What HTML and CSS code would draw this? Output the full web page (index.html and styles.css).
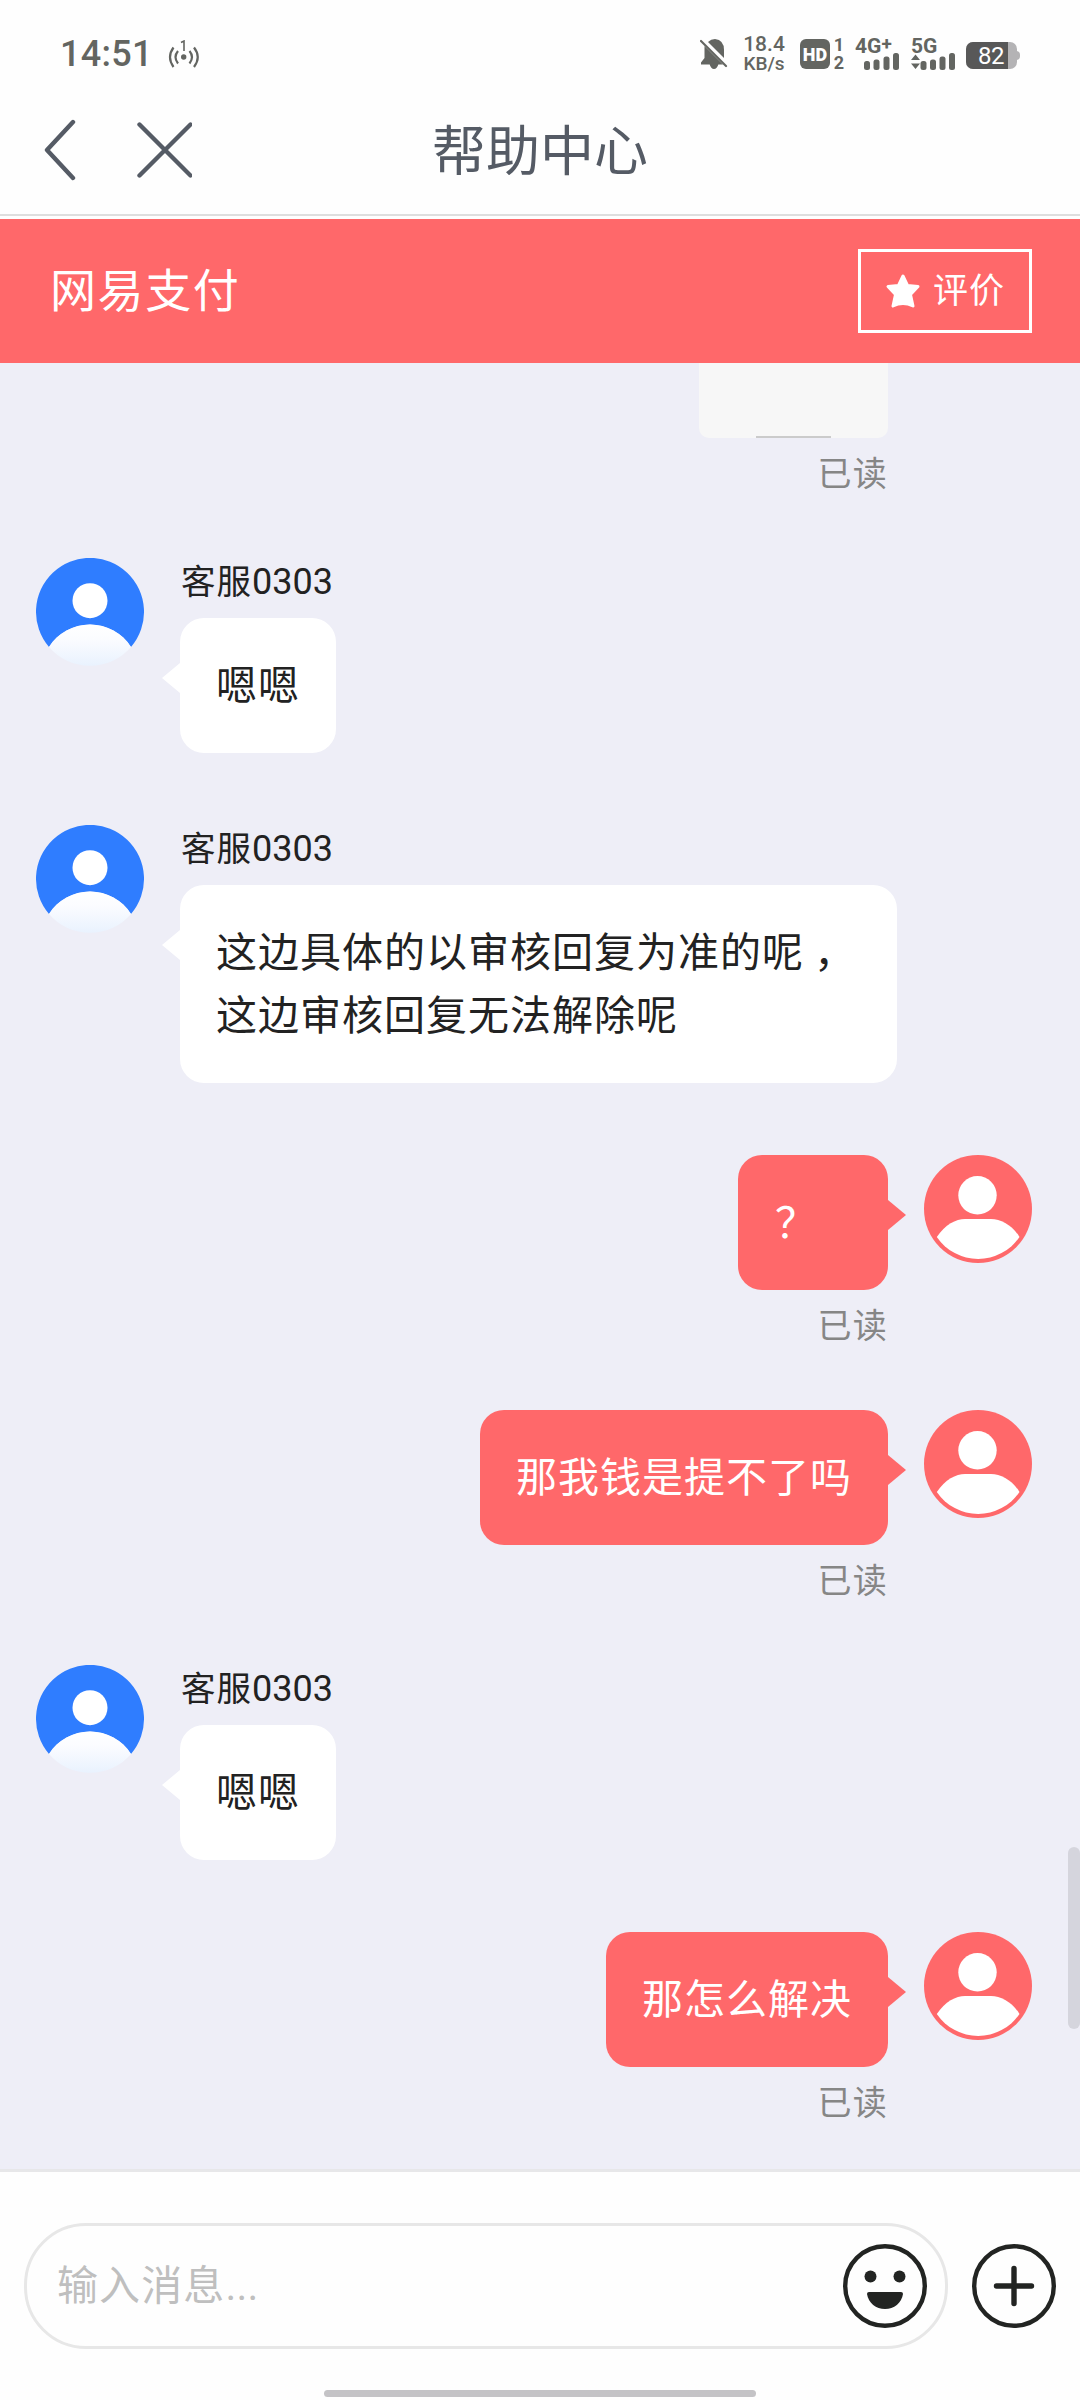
FILE: index.html
```html
<!DOCTYPE html>
<html lang="zh-CN">
<head>
<meta charset="utf-8">
<title>帮助中心</title>
<link rel="stylesheet" href="styles.css">
</head>
<body>
<svg class="defs" width="0" height="0" aria-hidden="true">
  <defs>
    <linearGradient id="shirt" x1="0" y1="0" x2="0" y2="1">
      <stop offset="0" stop-color="#ffffff"/>
      <stop offset="0.35" stop-color="#fbfcff"/>
      <stop offset="1" stop-color="#e9f2fe"/>
    </linearGradient>
    <symbol id="agent" viewBox="0 0 108 108">
      <path d="M13 89A54 54 0 1 1 95 89A48.500 48.500 0 0 0 13 89Z" fill="#2f7dff"/>
      <path d="M13 89A48.500 48.500 0 0 1 95 89A54 54 0 0 1 13 89Z" fill="url(#shirt)"/>
      <circle cx="54" cy="42.7" r="17.5" fill="#fff"/>
    </symbol>
    <symbol id="user" viewBox="0 0 108 108">
      <circle cx="54" cy="54" r="54" fill="#ff686a"/>
      <circle cx="53.5" cy="40.3" r="19.2" fill="#fff"/>
      <path d="M12.8 82C21 69.500 32 64 41 64H67C77 64 88 70 95.500 82A50 50 0 0 1 12.800 82Z" fill="#fff"/>
    </symbol>
  </defs>
</svg>
<div class="phone">
  <div class="status">
    <span class="clock">14:51</span>
    <svg class="hotspot" width="32" height="28" viewBox="0 0 32 28" fill="none" stroke="#636561" stroke-width="2.200">
      <path d="M5.500 7.500Q-1.500 17 5.500 27M10 11Q5 17 10 23.500M26 7.500Q33.500 17 26 27M21.500 11Q26.500 17 21.500 23.500"/>
      <path d="M13 2.500L16 1V11" stroke-width="1.600"/>
      <circle cx="15.700" cy="17" r="2.700" fill="#636561" stroke="none"/>
    </svg>
    <div class="status-right">
      <svg class="bell" width="28" height="32" viewBox="0 0 28 32" fill="#636561">
        <path d="M8 4Q11 1 15 1Q24 2 24 12V20L8 4Z"/>
        <path d="M4.500 8L23 26.500H1V24.500L4.500 20ZM9.500 26H18.500Q17 31 14 31Q11 31 9.500 26Z"/>
        <path d="M1 3L26 28" stroke="#636561" stroke-width="2.200" stroke-linecap="round"/>
      </svg>
      <div class="speed"><span>18.4</span><span class="unit">KB/s</span></div>
      <div class="hd">HD</div>
      <div class="sims"><span>1</span><span>2</span></div>
      <div class="net net-a">
        <span>4G<sup>+</sup></span>
        <svg width="36" height="17" viewBox="0 0 36 17" fill="#636561"><rect y="8" width="6" height="9" rx="2.500"/><rect x="9.500" y="6.500" width="6" height="10.500" rx="2.500"/><rect x="19.500" y="3.500" width="6" height="13.500" rx="2.500"/><rect x="29" y="0" width="6" height="17" rx="2.500"/></svg>
      </div>
      <div class="net net-b">
        <span>5G</span>
        <svg width="45" height="17" viewBox="0 0 45 17" fill="#636561"><path d="M4.500 1.500L9 7H0ZM0 10.500H9L4.500 16Z"/><rect x="9.500" y="8" width="6" height="9" rx="2.500"/><rect x="19" y="6.500" width="6" height="10.500" rx="2.500"/><rect x="28.500" y="3.500" width="6" height="13.500" rx="2.500"/><rect x="38" y="0" width="6" height="17" rx="2.500"/></svg>
      </div>
      <div class="battery"><span class="level">82</span></div>
    </div>
  </div>

  <div class="nav">
    <svg class="back" width="34" height="64" viewBox="0 0 34 64"><path d="M31 4L5 32L31 60"/></svg>
    <svg class="close" width="56" height="56" viewBox="0 0 56 56"><path d="M3.500 2.500L54.500 53.500M54.500 2.500L3.500 53.500"/></svg>
    <h1>帮助中心</h1>
  </div>

  <div class="brand">
    <span>网易支付</span>
    <div class="rate">
      <svg width="36" height="36" viewBox="0 0 36 36"><path d="M18 3L22.500 12.500L33 13.500L25.500 21.500L28 33Q18 28 8 33L10.500 21.500L3 13.500L13.500 12.500Z" fill="#fff" stroke="#fff" stroke-width="3" stroke-linejoin="round"/></svg>
      <span>评价</span>
    </div>
  </div>

  <div class="chat">
    <div class="sent">
      <div class="photo"><i></i></div>
      <div class="read">已读</div>
    </div>
    <div class="msg">
      <svg class="avatar"><use href="#agent"/></svg>
      <div><div class="name"><span>客服</span>0303</div><div class="bubble">嗯嗯</div></div>
    </div>
    <div class="msg">
      <svg class="avatar"><use href="#agent"/></svg>
      <div><div class="name"><span>客服</span>0303</div><div class="bubble wide">这边具体的以审核回复为准的呢<span class="comma">，</span><br>这边审核回复无法解除呢</div></div>
    </div>
    <div class="msg mine">
      <svg class="avatar"><use href="#user"/></svg>
      <div><div class="bubble short">？</div><div class="read">已读</div></div>
    </div>
    <div class="msg mine">
      <svg class="avatar"><use href="#user"/></svg>
      <div><div class="bubble">那我钱是提不了吗</div><div class="read">已读</div></div>
    </div>
    <div class="msg">
      <svg class="avatar"><use href="#agent"/></svg>
      <div><div class="name"><span>客服</span>0303</div><div class="bubble">嗯嗯</div></div>
    </div>
    <div class="msg mine">
      <svg class="avatar"><use href="#user"/></svg>
      <div><div class="bubble">那怎么解决</div><div class="read">已读</div></div>
    </div>
    <div class="scrollbar"></div>
  </div>

  <div class="composer">
    <div class="field">
      <div class="placeholder">输入消息<span>...</span></div>
      <svg width="84" height="84" viewBox="0 0 84 84"><circle cx="42" cy="42" r="39.800" fill="none" stroke="#222422" stroke-width="4.400"/><circle cx="27.500" cy="32.500" r="6" fill="#222422"/><circle cx="56.500" cy="32.500" r="6" fill="#222422"/><path d="M26 48H58Q60 48 60 50C58.500 59 51 65 42 65S25.500 59 24 50Q24 48 26 48Z" fill="#222422"/></svg>
    </div>
    <svg width="84" height="84" viewBox="0 0 84 84" fill="none" stroke="#222422"><circle cx="42" cy="42" r="39.800" stroke-width="4.400"/><path d="M42 24.500V59.500M24.500 42H59.500" stroke-width="5.400" stroke-linecap="round"/></svg>
  </div>
  <div class="home"></div>
</div>
</body>
</html>
```
FILE: styles.css
```css
* { box-sizing: border-box; }
body {
  margin: 0;
  font-family: Roboto, "Noto Sans CJK SC", sans-serif;
  color: #222;
  background: #fff;
}
svg { display: block; flex: none; }
.defs { position: absolute; }
.phone {
  width: 1080px;
  height: 2400px;
  display: flex;
  flex-direction: column;
  overflow: hidden;
  background: #fefefe;
}

/* status bar */
.status {
  height: 86px;
  flex: none;
  display: flex;
  align-items: flex-start;
  padding: 36px 60px 0;
  color: #636561;
}
.clock { font-size: 36px; font-weight: 500; line-height: 36px; letter-spacing: 0.3px; width: 108px; }
.hotspot { margin-top: 4px; }
.status-right { margin-left: auto; display: flex; align-items: flex-start; }
.bell { margin-top: 2px; }
.speed {
  width: 42px;
  margin-left: 15px;
  display: flex;
  flex-direction: column;
  align-items: center;
  font-size: 21px;
  line-height: 17px;
  font-weight: 500;
}
.speed .unit { font-size: 19px; line-height: 22px; }
.hd {
  width: 30px;
  height: 30px;
  margin: 3px 0 0 15px;
  border-radius: 6px;
  background: #636561;
  color: #fff;
  font-size: 18px;
  line-height: 31px;
  font-weight: 900;
  text-align: center;
}
.sims {
  width: 12px;
  margin: 0 0 0 3px;
  display: flex;
  flex-direction: column;
  align-items: center;
  font-size: 18px;
  line-height: 18px;
  font-weight: 700;
}
.net { height: 34px; display: flex; flex-direction: column; font-weight: 700; font-size: 21px; line-height: 17px; }
.net span { height: 17px; white-space: nowrap; }
.net-a { width: 45px; margin-left: 10px; padding-top: 2px; }
.net-a svg { margin: -2px 0 0 9px; }
.net-b { width: 45px; margin-left: 11px; padding-top: 2px; }
.net-b svg { margin-top: -2px; }
.net sup { font-size: 19px; line-height: 0; vertical-align: 3px; }
.battery {
  width: 51px;
  height: 27px;
  margin: 6px 3px 0 10px;
  border-radius: 7px;
  background: #b4b3b5;
  position: relative;
}
.battery::after {
  content: "";
  position: absolute;
  right: -3px;
  top: 9px;
  width: 4px;
  height: 9px;
  border-radius: 0 4px 4px 0;
  background: #b4b3b5;
}
.level {
  display: block;
  width: 42px;
  height: 27px;
  padding-left: 12px;
  border-radius: 7px 0 0 7px;
  background: #585858;
  color: #fff;
  font-size: 24px;
  line-height: 28px;
  letter-spacing: -0.5px;
}

/* navigation */
.nav {
  height: 130px;
  flex: none;
  display: grid;
  grid-template-columns: 34px 56px 1fr;
  column-gap: 60px;
  align-items: center;
  padding: 0 42px;
  border-bottom: 2px solid #dedede;
}
.nav svg { fill: none; stroke: #555b65; stroke-width: 4.4; stroke-linecap: round; stroke-linejoin: round; }
.nav h1 {
  margin: 0 0 0 180px;
  padding-top: 6px;
  font-size: 54px;
  line-height: 80px;
  font-weight: 400;
  color: #555b65;
}
.brand {
  height: 144px;
  flex: none;
  margin-top: 3px;
  padding: 0 48px 0 50px;
  display: flex;
  align-items: center;
  justify-content: space-between;
  background: #ff686a;
  color: #fff;
  font-size: 46px;
  letter-spacing: 1.6px;
  line-height: 72px;
}
.rate {
  width: 174px;
  height: 84px;
  border: 3px solid #fff;
  display: flex;
  align-items: center;
  gap: 12px;
  padding-left: 24px;
  font-size: 35px;
  letter-spacing: 1px;
}
.rate span { padding-top: 2px; }

/* conversation */
.chat {
  height: 1806px;
  flex: none;
  position: relative;
  overflow: hidden;
  background: #eeeef7;
}
.sent {
  height: 195px;
  padding-right: 192px;
  display: flex;
  flex-direction: column;
  align-items: flex-end;
}
.photo {
  width: 189px;
  height: 75px;
  display: flex;
  justify-content: center;
  align-items: flex-end;
  border-radius: 0 0 10px 10px;
  background: #f7f7f7;
}
.photo i { width: 75px; height: 2px; margin-right: 1px; background: #cbcbcb; }
.msg { display: flex; align-items: flex-start; gap: 36px; padding: 0 36px; margin-bottom: 72px; }
.mine { flex-direction: row-reverse; padding: 0 48px; margin-bottom: 57px; }
.avatar { width: 108px; height: 108px; }
.name { height: 60px; padding-left: 1px; font-size: 36px; line-height: 48px; }
.name span { font-size: 34.5px; letter-spacing: 1px; }
.bubble {
  width: fit-content;
  padding: 37px 36px 35px;
  border-radius: 24px;
  background: #fff;
  font-size: 41px;
  letter-spacing: 1px;
  line-height: 63px;
  position: relative;
}
.bubble::before {
  content: "";
  position: absolute;
  left: -18px;
  top: 45px;
  border: solid transparent;
  border-width: 15px 18px 15px 0;
  border-right-color: #fff;
}
.wide { width: 717px; padding-right: 20px; }
.comma { padding-left: 10px; }
.mine .bubble { margin-left: auto; background: #ff686a; color: #fff; }
.mine .bubble::before {
  left: auto;
  right: -18px;
  border-width: 15px 0 15px 18px;
  border-left-color: #ff686a;
}
.mine .short { width: 150px; padding-left: 37px; font-size: 42px; }
.read { margin-top: 9px; font-size: 34px; letter-spacing: 1.2px; line-height: 55px; height: 54px; text-align: right; color: #868686; }
.scrollbar {
  position: absolute;
  right: 0;
  top: 1484px;
  width: 12px;
  height: 182px;
  border-radius: 6px;
  background: #d5d5dd;
}

/* message composer */
.composer {
  height: 218px;
  flex: none;
  border-top: 3px solid #e7e7e9;
  display: flex;
  justify-content: space-between;
  align-items: center;
  padding: 15px 24px 2px;
  background: #fefefe;
}
.field {
  width: 924px;
  height: 126px;
  border: 3px solid #e7e7e7;
  border-radius: 62px;
  display: flex;
  align-items: center;
  justify-content: space-between;
  padding: 0 18px 0 30px;
  font-size: 41px;
  letter-spacing: 1.1px;
  line-height: 63px;
  color: #bfbfbf;
}
.placeholder span { letter-spacing: 0.2px; }
.home { width: 432px; height: 7px; flex: none; align-self: center; margin-top: 3px; border-radius: 4px; background: #c4c3c6; }
```
